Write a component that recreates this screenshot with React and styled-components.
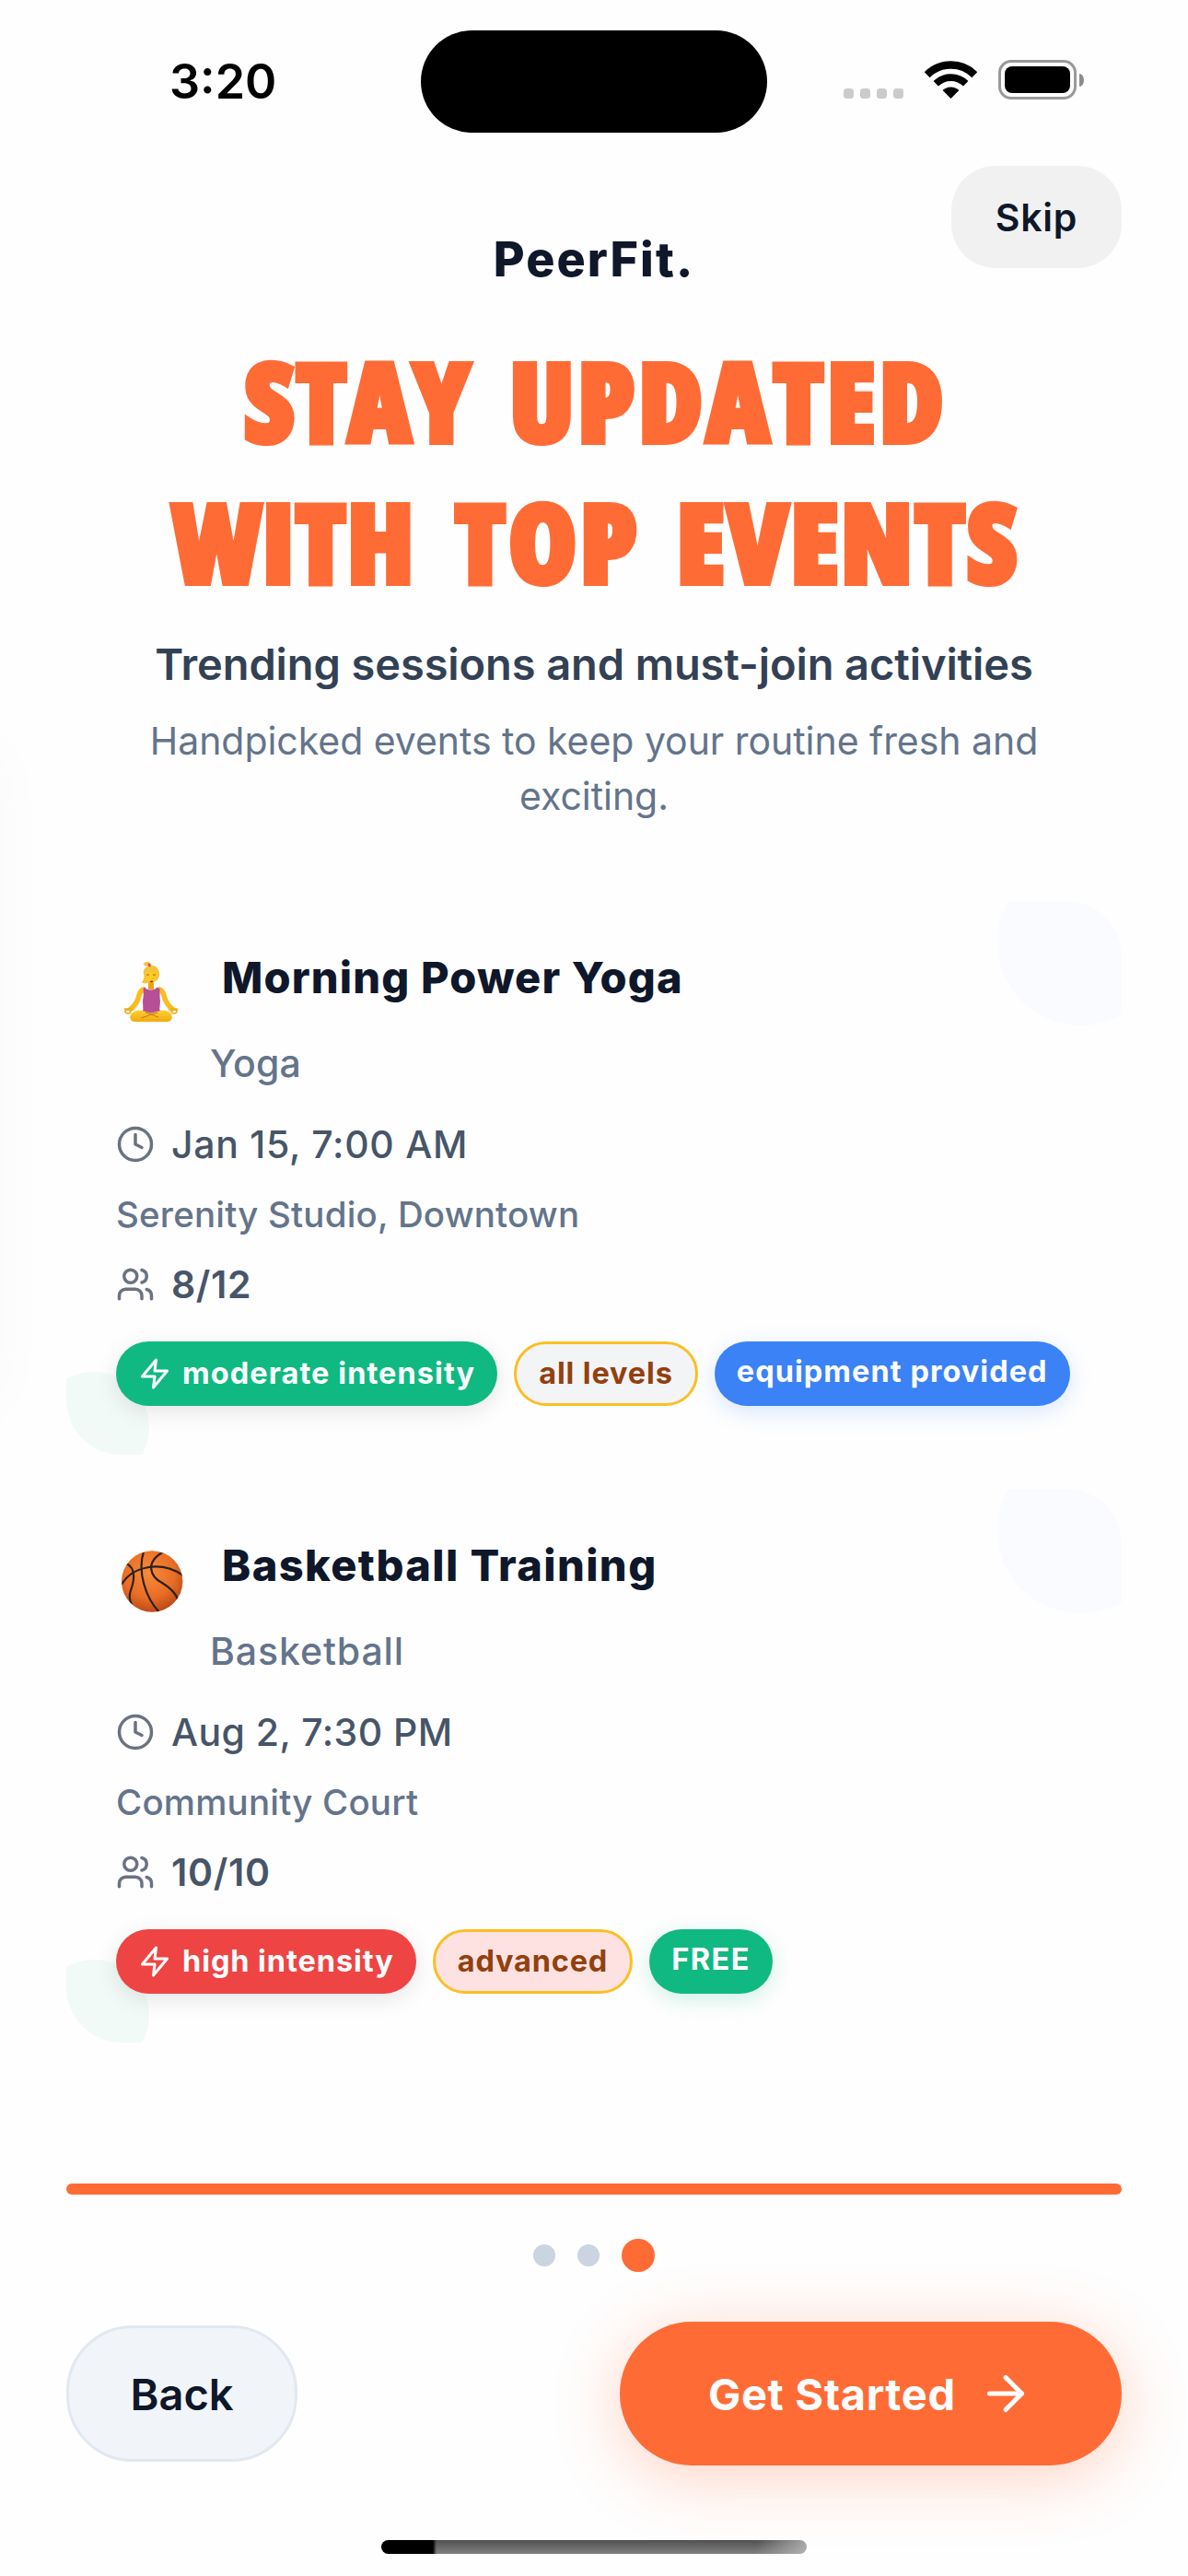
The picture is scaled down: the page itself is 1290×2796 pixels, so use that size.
import React from "react";
import styled, { createGlobalStyle } from "styled-components";
import { ArrowRight, Clock, Users } from "lucide-react";

const GlobalStyle = createGlobalStyle`
  *, *::before, *::after { box-sizing: border-box; }
  body {
    margin: 0;
    background: #fefefe;
    font-family: Inter, "Liberation Sans", sans-serif;
    color: #0f172a;
  }
  button { font-family: inherit; margin: 0; border: 0; cursor: pointer; }
  svg { display: block; flex: none; }
`;

const Screen = styled.main`
  position: relative;
  display: flex;
  flex-direction: column;
  width: 1290px;
  height: 2796px;
  overflow: hidden;
  background: #fefefe;
`;

const EdgeShade = styled.div`
  position: absolute;
  left: -66px;
  top: 810px;
  width: 60px;
  height: 720px;
  border-radius: 40px;
  box-shadow: 0 0 72px rgba(0, 0, 0, 0.03);
`;

/* Status bar */
const StatusBar = styled.header`
  display: grid;
  grid-template-columns: 457px 376px 457px;
  align-items: center;
  height: 177px;
`;

const Time = styled.span`
  padding-left: 184px;
  color: #000;
  font-size: 52px;
  font-weight: 600;
  line-height: 64px;
`;

const Island = styled.div`
  height: 111px;
  border-radius: 56px;
  background: #000;
`;

const Indicators = styled.div`
  display: flex;
  align-items: flex-end;
  height: 43px;
  margin: -4px 0 0 83px;
`;

const Signal = styled.div`
  display: flex;
  gap: 7px;
  margin: 0 23px 1px 0;
`;

const SignalDot = styled.i`
  width: 11px;
  height: 11px;
  border-radius: 3.5px;
  background: #cbcbcb;
`;

const BatteryShell = styled.div`
  width: 85px;
  height: 43px;
  margin-left: 23px;
  padding: 4px;
  border: 3px solid #999;
  border-radius: 14px;
`;

const BatteryCharge = styled.div`
  height: 100%;
  border-radius: 8px;
  background: #000;
`;

const BatteryCap = styled.div`
  align-self: center;
  width: 5px;
  height: 14px;
  margin-left: 3px;
  border-radius: 0 5px 5px 0 / 0 7px 7px 0;
  background: #8c8c8c;
`;

/* Heading block */
const TopRow = styled.div`
  display: grid;
  grid-template-columns: 1fr auto 1fr;
  align-items: end;
  height: 137px;
  padding: 3px 72px 0;
`;

const Brand = styled.div`
  grid-column: 2;
  font-size: 52px;
  font-weight: 800;
  line-height: 64px;
  letter-spacing: 2.1px;
`;

const SkipButton = styled.button`
  justify-self: end;
  align-self: start;
  width: 185px;
  height: 111px;
  border-radius: 48px;
  background: #f1f1f1;
  color: #0f172a;
  font-size: 41px;
  font-weight: 600;
  letter-spacing: 0.75px;
  line-height: 54px;
`;

const Title = styled.h1`
  margin: 44px 0 -1px;
  color: #ff6b35;
  font-family: "Open Sans", "Liberation Sans", sans-serif;
  font-size: 119px;
  font-weight: 800;
  font-stretch: 75%;
  line-height: 153px;
  -webkit-text-stroke: 6px #ff6b35;
`;

const TitleLine = styled.div`
  display: flex;
  justify-content: center;
  gap: 46px;
`;

const TitleWord = styled.span`
  display: flex;
  justify-content: center;
  width: ${(p) => p.$width}px;
  letter-spacing: ${(p) => p.$tracking}px;
  white-space: nowrap;
`;

const Subtitle = styled.h2`
  margin: 28px 0 0;
  color: #334155;
  font-size: 47px;
  font-weight: 600;
  line-height: 60px;
  letter-spacing: -0.1px;
  text-align: center;
`;

const Description = styled.p`
  margin: 23px 144px 0;
  color: #64748b;
  font-size: 41px;
  line-height: 60px;
  letter-spacing: -0.04px;
  text-align: center;
`;

/* Event cards */
const EventList = styled.section`
  display: flex;
  flex-direction: column;
  gap: 37px;
  margin: 84px 72px 0;
`;

const Card = styled.article`
  position: relative;
  display: flex;
  flex-direction: column;
  height: 601px;
  padding: 53px 54px;
  border-radius: 60px;
  overflow: hidden;
  isolation: isolate;
  &::before, &::after {
    content: "";
    position: absolute;
    z-index: -1;
    border-radius: 50%;
  }
  &::before {
    top: -45px;
    right: -45px;
    width: 180px;
    height: 180px;
    background: #fafbff;
  }
  &::after {
    bottom: -30px;
    left: -30px;
    width: 120px;
    height: 120px;
    background: #f1faf7;
  }
`;

const CardHead = styled.div`
  display: flex;
  gap: 18px;
  margin-left: -6px;
`;

const Emoji = styled.svg`
  width: 90px;
  height: 90px;
  margin-top: -1px;
`;

const EventName = styled.h3`
  margin: 0 0 36px 13px;
  font-size: 47px;
  font-weight: 800;
  line-height: 60px;
  letter-spacing: ${(p) => p.$tracking}px;
`;

const Sport = styled.div`
  color: #64748b;
  font-size: 41px;
  font-weight: 550;
  line-height: 54px;
  letter-spacing: ${(p) => p.$tracking}px;
`;

const Meta = styled.div`
  display: flex;
  align-items: center;
  gap: 18px;
  height: 54px;
  margin-top: ${(p) => p.$top}px;
  color: #475569;
  font-size: 41px;
  font-weight: ${(p) => p.$weight || 550};
  letter-spacing: ${(p) => p.$tracking}px;
  svg { color: #6b7280; }
`;

const Place = styled.div`
  margin-top: 25px;
  color: #64748b;
  font-size: 38.5px;
  font-weight: 500;
  line-height: 48px;
  letter-spacing: 0.18px;
`;

const Tags = styled.div`
  display: flex;
  gap: 18px;
  margin-top: 35px;
`;

const Tag = styled.span`
  display: flex;
  align-items: center;
  gap: 12px;
  height: 70px;
  padding: 0 24px;
  border-radius: 36px;
  color: #fff;
  font-size: 32.5px;
  font-weight: 700;
  line-height: 40px;
  letter-spacing: ${(p) => p.$tracking}px;
  white-space: nowrap;
`;

const IntensityTag = styled(Tag)`
  background: ${(p) => p.$color};
  box-shadow: 0 6px 24px rgba(0, 0, 0, 0.1);
`;

const LevelTag = styled(Tag)`
  border: 3px solid #fbbf24;
  background: ${(p) => p.$color};
  color: #92400e;
`;

const PerkTag = styled(Tag)`
  padding-bottom: 5px;
  background: ${(p) => p.$color};
  box-shadow: 0 6px 24px ${(p) => p.$glow};
`;

/* Footer */
const Footer = styled.footer`
  display: flex;
  flex-direction: column;
  margin-top: auto;
  padding: 0 72px 24px;
`;

const Progress = styled.div`
  height: 12px;
  border-radius: 6px;
  background: #ff6b35;
`;

const Dots = styled.div`
  display: flex;
  justify-content: center;
  align-items: center;
  gap: 24px;
  height: 36px;
  margin-top: 48px;
`;

const Dot = styled.i`
  width: ${(p) => (p.$active ? 36 : 24)}px;
  height: ${(p) => (p.$active ? 36 : 24)}px;
  border-radius: 50%;
  background: ${(p) => (p.$active ? "#ff6b35" : "#cbd5e1")};
`;

const Actions = styled.div`
  display: flex;
  justify-content: space-between;
  align-items: center;
  height: 156px;
  margin-top: 54px;
`;

const BackButton = styled.button`
  width: 251px;
  height: 148px;
  border: 3px solid #e2e8f0;
  border-radius: 72px;
  background: #f1f5f9;
  color: #0f172a;
  font-size: 47px;
  font-weight: 600;
`;

const StartButton = styled.button`
  display: flex;
  align-items: center;
  gap: 24px;
  width: 545px;
  height: 156px;
  padding: 0 0 0 96px;
  border-radius: 78px;
  background: #ff6b35;
  color: #fff;
  font-size: 47px;
  font-weight: 700;
  letter-spacing: 0.65px;
  box-shadow: 0 12px 72px rgba(255, 107, 53, 0.3);
`;

const HomeIndicator = styled.div`
  align-self: center;
  width: 462px;
  height: 15px;
  margin-top: 81px;
  border-radius: 8px;
  background:
    linear-gradient(90deg, #000 56px, transparent 60px),
    linear-gradient(100deg, transparent 88%, rgba(190, 190, 190, 0.8) 100%),
    linear-gradient(#505050, #808080);
`;

const WifiIcon = () => (
  <svg width="57" height="43" viewBox="0 0 57 43" fill="none" stroke="#000">
    <path d="M2.7 16.2a36.5 36.5 0 0 1 51.6 0" strokeWidth="8.4" />
    <path d="M12.3 25.8a22.9 22.9 0 0 1 32.4 0" strokeWidth="7.6" />
    <path d="M28.5 42 19.6 33.1a12.6 12.6 0 0 1 17.8 0z" fill="#000" stroke="none" />
  </svg>
);

const BoltIcon = () => (
  <svg width="36" height="36" viewBox="0 0 24 24" fill="none" stroke="#fff" strokeWidth="2" strokeLinecap="round" strokeLinejoin="round">
    <path d="M13 2 3 14h9l-1 8 10-12h-9z" />
  </svg>
);

const YogaEmoji = () => (
  <Emoji viewBox="0 0 90 90">
    <defs>
      <linearGradient id="skin" x1="0" y1="0" x2="0" y2="1">
        <stop offset="0" stopColor="#ffcf2e" />
        <stop offset="1" stopColor="#f2a912" />
      </linearGradient>
    </defs>
    <path d="M41 19c-3-1-6-1-5-3 1-2 5-3 7-1l2 3c5 0 8 4 8 9 0 5-3 8-5 8l-8 2c-3 1-5 0-6-1 2-2 3-6 2-9-1-4 1-7 5-8z" fill="#f5c23a" />
    <path d="M41 15.5l2.500 1v3l-2.500-.5z" fill="#e0447c" />
    <path d="M41 36h6v8h-6z" fill="#eea40f" />
    <path d="M38 25c3 1 9 0 13-2 1 6-1 14-7 14-5 0-7-6-6-12z" fill="#ffc928" />
    <path d="M39 27.8q1.500 1 3 0M46 27.8q1.500 1 3 0" stroke="#7a4a12" strokeWidth=".8" fill="none" />
    <path d="M42.5 35.5q2-1.800 4 0-2 1.800-4 0z" fill="#8c3010" />
    <path d="M36 44c-4 1-5 6-6 10-2 5-4 8-8 11M53 44c4 1 5 6 6 10 2 5 4 8 8 11" stroke="#f9bd20" strokeWidth="5.5" fill="none" strokeLinecap="round" />
    <path d="M16 65.5c3 1 5-1 8 0M72 65.5c-3 1-5-1-8 0" stroke="#f5b51d" strokeWidth="2.6" fill="none" strokeLinecap="round" />
    <ellipse cx="19" cy="67.5" rx="3" ry="2.4" stroke="#efaa12" strokeWidth="1.5" fill="none" />
    <ellipse cx="69" cy="67.5" rx="3" ry="2.4" stroke="#efaa12" strokeWidth="1.5" fill="none" />
    <path d="M35 66h19v8H35z" fill="#4c9fd6" />
    <path d="M37.5 41.5c1 4 11 4 13 0l3 1.5c0 6 0 10 .5 14l-1 11c-5 1.5-13 1.5-17.5 0L35 56c1-4 1-9 .5-13z" fill="#b84e96" />
    <path d="M24 69c4-3 9-2.5 14-1l20 6c4 2 2 5-3 5H26c-6-1-6-7-2-10z" fill="url(#skin)" />
    <path d="M64 69c-4-3-9-2.5-14-1l-20 6c-4 2-2 5 3 5h29c6-1 6-7 2-10z" fill="url(#skin)" />
    <path d="M33 75l18-6M38 69l14 5" stroke="#c97c0b" strokeWidth="1" fill="none" />
  </Emoji>
);

const BasketballEmoji = () => (
  <Emoji viewBox="0 0 90 90">
    <defs>
      <radialGradient id="ball" cx=".45" cy=".35" r=".65">
        <stop offset="0" stopColor="#f98b3c" />
        <stop offset=".65" stopColor="#e86d25" />
        <stop offset="1" stopColor="#bd4c19" />
      </radialGradient>
      <clipPath id="ballClip"><circle cx="45.2" cy="48.5" r="33" /></clipPath>
    </defs>
    <circle cx="45.2" cy="48.5" r="33.2" fill="url(#ball)" />
    <g clipPath="url(#ballClip)" fill="none" stroke="#2a211d" strokeWidth="2.2">
      <path d="M12 52C22 34 52 24 79 42" />
      <path d="M36 16C29 38 38 66 53 82" />
      <path d="M58 16C36 28 44 44 56 50 66 56 71 62 73 68" />
      <path d="M17 29C29 34 25 50 22 58 20 64 20 68 24 76" />
    </g>
  </Emoji>
);

const events = [
  {
    Icon: YogaEmoji,
    name: ["Morning Power Yoga", 1.15],
    sport: ["Yoga", 0.1],
    date: ["Jan 15, 7:00 AM", 0.7],
    place: "Serenity Studio, Downtown",
    going: ["8/12", 0.6],
    intensity: ["moderate intensity", 1.06, "#10b981"],
    level: ["all levels", 0.85, "#f3f4f6"],
    perk: ["equipment provided", 1.04, "#3b82f6", "rgba(59, 130, 246, 0.2)"],
  },
  {
    Icon: BasketballEmoji,
    name: ["Basketball Training", 1.4],
    sport: ["Basketball", 0.9],
    date: ["Aug 2, 7:30 PM", 0.43],
    place: "Community Court",
    going: ["10/10", 0.7],
    intensity: ["high intensity", 0.92, "#ef4444"],
    level: ["advanced", 0.8, "#fee2e2"],
    perk: ["FREE", 1.5, "#10b981", "rgba(16, 185, 129, 0.2)"],
  },
];

function EventCard({ event }) {
  const { Icon, name, sport, date, place, going, intensity, level, perk } = event;
  return (
    <Card>
      <CardHead>
        <Icon />
        <div>
          <EventName $tracking={name[1]}>{name[0]}</EventName>
          <Sport $tracking={sport[1]}>{sport[0]}</Sport>
        </div>
      </CardHead>
      <Meta $top={34} $tracking={date[1]}>
        <Clock size={42} strokeWidth={2} />
        {date[0]}
      </Meta>
      <Place>{place}</Place>
      <Meta $top={25} $weight={600} $tracking={going[1]}>
        <Users size={42} strokeWidth={2} />
        {going[0]}
      </Meta>
      <Tags>
        <IntensityTag $tracking={intensity[1]} $color={intensity[2]}>
          <BoltIcon />
          {intensity[0]}
        </IntensityTag>
        <LevelTag $tracking={level[1]} $color={level[2]}>{level[0]}</LevelTag>
        <PerkTag $tracking={perk[1]} $color={perk[2]} $glow={perk[3]}>{perk[0]}</PerkTag>
      </Tags>
    </Card>
  );
}

export default function App() {
  return (
    <Screen>
      <GlobalStyle />
      <EdgeShade />
      <StatusBar>
        <Time>3:20</Time>
        <Island />
        <Indicators>
          <Signal>
            <SignalDot />
            <SignalDot />
            <SignalDot />
            <SignalDot />
          </Signal>
          <WifiIcon />
          <BatteryShell>
            <BatteryCharge />
          </BatteryShell>
          <BatteryCap />
        </Indicators>
      </StatusBar>
      <TopRow>
        <Brand>PeerFit.</Brand>
        <SkipButton>Skip</SkipButton>
      </TopRow>
      <Title>
        <TitleLine>
          <TitleWord $width={246} $tracking={1.8}>STAY</TitleWord>
          <TitleWord $width={466} $tracking={4}>UPDATED</TitleWord>
        </TitleLine>
        <TitleLine>
          <TitleWord $width={263} $tracking={1.5}>WITH</TitleWord>
          <TitleWord $width={196} $tracking={3.5}>TOP</TitleWord>
          <TitleWord $width={364} $tracking={2.2}>EVENTS</TitleWord>
        </TitleLine>
      </Title>
      <Subtitle>Trending sessions and must-join activities</Subtitle>
      <Description>Handpicked events to keep your routine fresh and exciting.</Description>
      <EventList>
        {events.map((event) => (
          <EventCard key={event.place} event={event} />
        ))}
      </EventList>
      <Footer>
        <Progress />
        <Dots>
          <Dot />
          <Dot />
          <Dot $active />
        </Dots>
        <Actions>
          <BackButton>Back</BackButton>
          <StartButton>
            Get Started
            <ArrowRight size={60} strokeWidth={2} />
          </StartButton>
        </Actions>
        <HomeIndicator />
      </Footer>
    </Screen>
  );
}
